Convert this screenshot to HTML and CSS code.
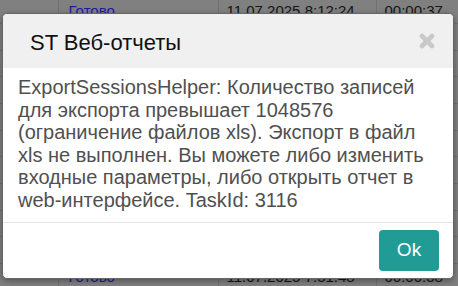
FILE: index.html
```html
<!DOCTYPE html>
<html lang="ru">
<head>
    <meta charset="UTF-8">
    <meta name="viewport" content="width=device-width, initial-scale=1.0">
    <title>ST Веб-отчеты</title>
    <link rel="stylesheet" href="styles.css">
</head>
<body>

    <table class="sessions">
        <tr><td></td><td class="status">Готово</td><td>11.07.2025 8:12:24</td><td>00:00:37</td></tr>
        <tr><td></td><td class="status">Готово</td><td>11.07.2025 8:10:51</td><td>00:00:29</td></tr>
        <tr><td></td><td class="status">Готово</td><td>11.07.2025 8:09:02</td><td>00:00:41</td></tr>
        <tr><td></td><td class="status">Готово</td><td>11.07.2025 8:07:44</td><td>00:00:18</td></tr>
        <tr><td></td><td class="status">Готово</td><td>11.07.2025 8:05:13</td><td>00:00:35</td></tr>
        <tr><td></td><td class="status">Готово</td><td>11.07.2025 8:03:27</td><td>00:00:22</td></tr>
        <tr><td></td><td class="status">Готово</td><td>11.07.2025 8:01:09</td><td>00:00:40</td></tr>
        <tr><td></td><td class="status">Готово</td><td>11.07.2025 7:58:55</td><td>00:00:31</td></tr>
        <tr><td></td><td class="status">Готово</td><td>11.07.2025 7:56:30</td><td>00:00:26</td></tr>
        <tr><td></td><td class="status">Готово</td><td>11.07.2025 7:54:12</td><td>00:00:33</td></tr>
        <tr><td></td><td class="status">Готово</td><td>11.07.2025 7:51:48</td><td>00:00:38</td></tr>
    </table>

    <div class="modal">
        <div class="modal-header">
            <h4 class="modal-title">ST Веб-отчеты</h4>
            <button class="close" aria-label="Закрыть">
                <svg width="16" height="16" viewBox="0 0 16 16">
                    <path d="M3 3 L13 13 M13 3 L3 13" stroke="#c9c9c9" stroke-width="4.6" stroke-linecap="round"/>
                </svg>
            </button>
        </div>
        <div class="modal-body">
            ExportSessionsHelper: Количество записей для экспорта превышает 1048576 (ограничение файлов xls). Экспорт в файл xls не выполнен. Вы можете либо изменить входные параметры, либо открыть отчет в web-интерфейсе. TaskId: 3116
        </div>
        <div class="modal-footer">
            <button class="btn-ok">Ok</button>
        </div>
    </div>

</body>
</html>
```

FILE: styles.css
```css
body {
    margin: 0;
    background: #808080;
    font-family: 'Liberation Sans', Arial, sans-serif;
    overflow: hidden;
}
.sessions {
    border-collapse: collapse;
    margin-top: -3px;
    width: 480px;
    font-size: 15px;
    color: #151515;
}
.sessions td {
    height: 26.67px;
    padding: 0 8px;
    border: 1px solid #717171;
    border-top: none;
    box-sizing: border-box;
    white-space: nowrap;
}
.sessions td:nth-child(1) {
    width: 58px;
    border-left: none;
}
.sessions td:nth-child(2) {
    width: 160px;
    padding-left: 10px;
}
.sessions td:nth-child(3) {
    width: 158px;
}
.status {
    color: #1c1c9e;
}
.modal {
    position: absolute;
    left: 2px;
    top: 13px;
    width: 450px;
    background: white;
    border: 1px solid #666;
    border-radius: 5px;
    box-shadow: 0 2px 6px rgba(0, 0, 0, 0.35);
    overflow: hidden;
}
.modal-header {
    height: 54px;
    background: #f0f0f0;
    display: flex;
    align-items: center;
    justify-content: space-between;
    padding: 0 18px 0 27px;
}
.modal-title {
    margin: 0;
    font-size: 22px;
    font-weight: normal;
    color: #111;
    padding-top: 3px;
}
.close {
    border: none;
    background: none;
    padding: 0;
    width: 16px;
    height: 16px;
    cursor: pointer;
}
.close svg {
    display: block;
}
.modal-body {
    padding: 8px 14px 10px 15px;
    font-size: 20px;
    line-height: 22.6px;
    color: #505050;
}
.modal-footer {
    border-top: 1px solid #e5e5e5;
    display: flex;
    justify-content: flex-end;
    padding: 7px 14px 7px;
}
.btn-ok {
    width: 60px;
    height: 41px;
    border: none;
    border-radius: 4px;
    background: #219b96;
    color: white;
    font-family: 'Liberation Sans', Arial, sans-serif;
    font-size: 19px;
    cursor: pointer;
}
```
